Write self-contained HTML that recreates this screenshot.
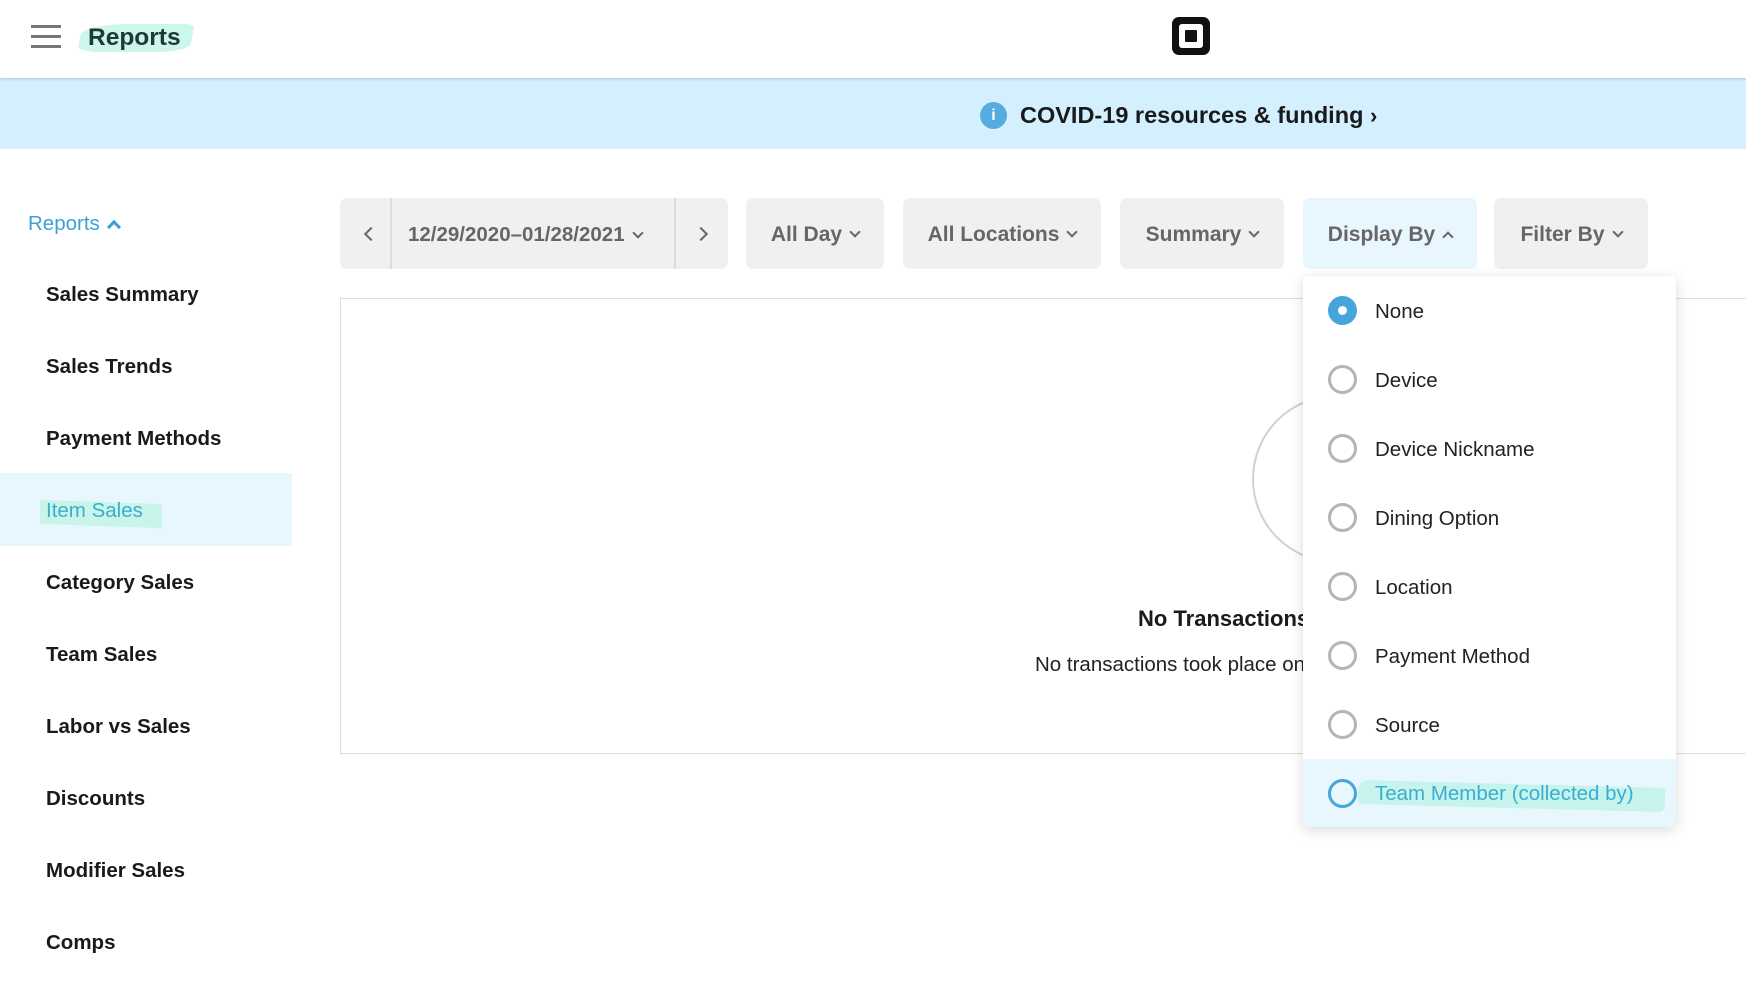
<!DOCTYPE html>
<html><head><meta charset="utf-8"><style>
*{margin:0;padding:0;box-sizing:border-box}
body{width:1746px;height:996px;overflow:hidden;background:#fff;font-family:"Liberation Sans",sans-serif;position:relative;color:#1a1a1a}
.a{position:absolute}
.t{position:absolute;line-height:30px;height:30px;white-space:nowrap}
.btn{position:absolute;top:198px;height:71px;background:#f0f0f0;border-radius:7px;color:#666;font-size:21px;font-weight:bold;display:flex;align-items:center;justify-content:center;gap:9px;padding-top:2px}
.dn{display:inline-block;width:8px;height:8px;border-right:2.5px solid #666;border-bottom:2.5px solid #666;transform:rotate(45deg);margin-top:-5px}
.nav{position:absolute;left:46px;font-size:20.5px;font-weight:bold;line-height:30px;color:#1a1a1a}
.opt{position:absolute;left:1375px;font-size:20.5px;line-height:30px;color:#222}
.rad{position:absolute;left:1328px;width:29px;height:29px;border-radius:50%;border:3px solid #b5b5b5;background:#fff}
</style></head><body>
<div class="a" style="left:0;top:0;width:1746px;height:78px;background:#fff;box-shadow:0 1px 3px rgba(0,0,0,.18);z-index:2"></div>
<div class="a" style="left:31px;top:25px;width:30px;height:3px;background:#777;z-index:3"></div>
<div class="a" style="left:31px;top:35px;width:30px;height:3px;background:#777;z-index:3"></div>
<div class="a" style="left:31px;top:45px;width:30px;height:3px;background:#777;z-index:3"></div>
<div class="a" style="left:80px;top:24px;width:112px;height:28px;background:#cdf7ec;border-radius:40% 10% 30% 20%;transform:skewX(-10deg);z-index:3"></div>
<div class="t" style="left:88px;top:23px;font-size:24.5px;font-weight:bold;color:#1d3b33;z-index:4">Reports</div>
<div class="a" style="left:1172px;top:17px;width:38px;height:38px;background:#111;border-radius:7px;z-index:3"></div>
<div class="a" style="left:1179px;top:24px;width:24px;height:24px;background:#fff;border-radius:3px;z-index:4"></div>
<div class="a" style="left:1185px;top:30px;width:12px;height:12px;background:#111;border-radius:1px;z-index:5"></div>
<div class="a" style="left:0;top:78px;width:1746px;height:71px;background:#d4effd"></div>
<div class="a" style="left:980px;top:102px;width:27px;height:27px;border-radius:50%;background:#55acdf;color:#fff;font-weight:bold;font-size:16px;text-align:center;line-height:27px">i</div>
<div class="t" style="left:1020px;top:100px;font-size:23.5px;font-weight:bold;color:#1a1a1a">COVID-19 resources &amp; funding <span style="font-size:22px">›</span></div>
<div class="t" style="left:28px;top:209px;font-size:20.5px;color:#3d9fd8">Reports <span style="display:inline-block;width:10px;height:10px;border-left:3px solid #3d9fd8;border-top:3px solid #3d9fd8;transform:rotate(45deg);margin-left:4px;position:relative;top:2px"></span></div>
<div class="a" style="left:0;top:473px;width:292px;height:73px;background:#e8f6fd"></div>
<div class="a" style="left:40px;top:502px;width:122px;height:24px;background:#c8f4ea;transform:skewY(2deg)"></div>
<div class="nav" style="top:280px">Sales Summary</div>
<div class="nav" style="top:352px">Sales Trends</div>
<div class="nav" style="top:424px">Payment Methods</div>
<div class="nav" style="top:496px;color:#3aaed0;font-weight:normal">Item Sales</div>
<div class="nav" style="top:568px">Category Sales</div>
<div class="nav" style="top:640px">Team Sales</div>
<div class="nav" style="top:712px">Labor vs Sales</div>
<div class="nav" style="top:784px">Discounts</div>
<div class="nav" style="top:856px">Modifier Sales</div>
<div class="nav" style="top:928px">Comps</div>
<div class="btn" style="left:340px;width:388px"></div>
<div class="a" style="left:390px;top:198px;width:2px;height:71px;background:#ddd"></div>
<div class="a" style="left:674px;top:198px;width:2px;height:71px;background:#ddd"></div>
<div class="a" style="left:366px;top:229px;width:10px;height:10px;border-left:2.5px solid #666;border-bottom:2.5px solid #666;transform:rotate(45deg)"></div>
<div class="a" style="left:696px;top:229px;width:10px;height:10px;border-right:2.5px solid #666;border-top:2.5px solid #666;transform:rotate(45deg)"></div>
<div class="t" style="left:408px;top:220px;font-size:20.5px;font-weight:bold;color:#666">12/29/2020–01/28/2021 <span class="dn" style="margin-left:4px;vertical-align:middle"></span></div>
<div class="btn" style="left:746px;width:138px">All Day <span class="dn"></span></div>
<div class="btn" style="left:903px;width:198px">All Locations <span class="dn"></span></div>
<div class="btn" style="left:1120px;width:164px">Summary <span class="dn"></span></div>
<div class="btn" style="left:1303px;width:174px;background:#e8f6fd">Display By <span style="display:inline-block;width:8px;height:8px;border-left:2.5px solid #666;border-top:2.5px solid #666;transform:rotate(45deg);margin-top:4px"></span></div>
<div class="btn" style="left:1494px;width:154px">Filter By <span class="dn"></span></div>
<div class="a" style="left:340px;top:298px;width:1420px;height:456px;border:1.5px solid #ddd"></div>
<div class="a" style="left:1252px;top:395px;width:168px;height:168px;border-radius:50%;border:2px solid #ccd2d8"></div>
<div class="t" style="left:1138px;top:604px;font-size:22px;font-weight:bold">No Transactions</div>
<div class="t" style="left:1035px;top:650px;font-size:20.5px;color:#222">No transactions took place on</div>
<div class="a" style="left:1303px;top:276px;width:373px;height:551px;background:#fff;border-radius:6px;box-shadow:0 3px 14px rgba(0,0,0,.15);overflow:hidden">
<div class="a" style="left:0;top:483px;width:373px;height:68px;background:#e8f6fd"></div>
<div class="a" style="left:55px;top:508px;width:307px;height:24px;background:#c6f3ec;transform:rotate(1.5deg);border-radius:10px 3px 6px 3px"></div>
</div>
<div class="rad" style="top:296px;border:10px solid #46a5da"></div>
<div class="rad" style="top:365px"></div>
<div class="rad" style="top:434px"></div>
<div class="rad" style="top:503px"></div>
<div class="rad" style="top:572px"></div>
<div class="rad" style="top:641px"></div>
<div class="rad" style="top:710px"></div>
<div class="rad" style="top:779px;border-color:#46a5da;background:transparent"></div>
<div class="opt" style="top:297px">None</div>
<div class="opt" style="top:366px">Device</div>
<div class="opt" style="top:435px">Device Nickname</div>
<div class="opt" style="top:504px">Dining Option</div>
<div class="opt" style="top:573px">Location</div>
<div class="opt" style="top:642px">Payment Method</div>
<div class="opt" style="top:711px">Source</div>
<div class="opt" style="top:779px;color:#3aaed0">Team Member (collected by)</div>
</body></html>
